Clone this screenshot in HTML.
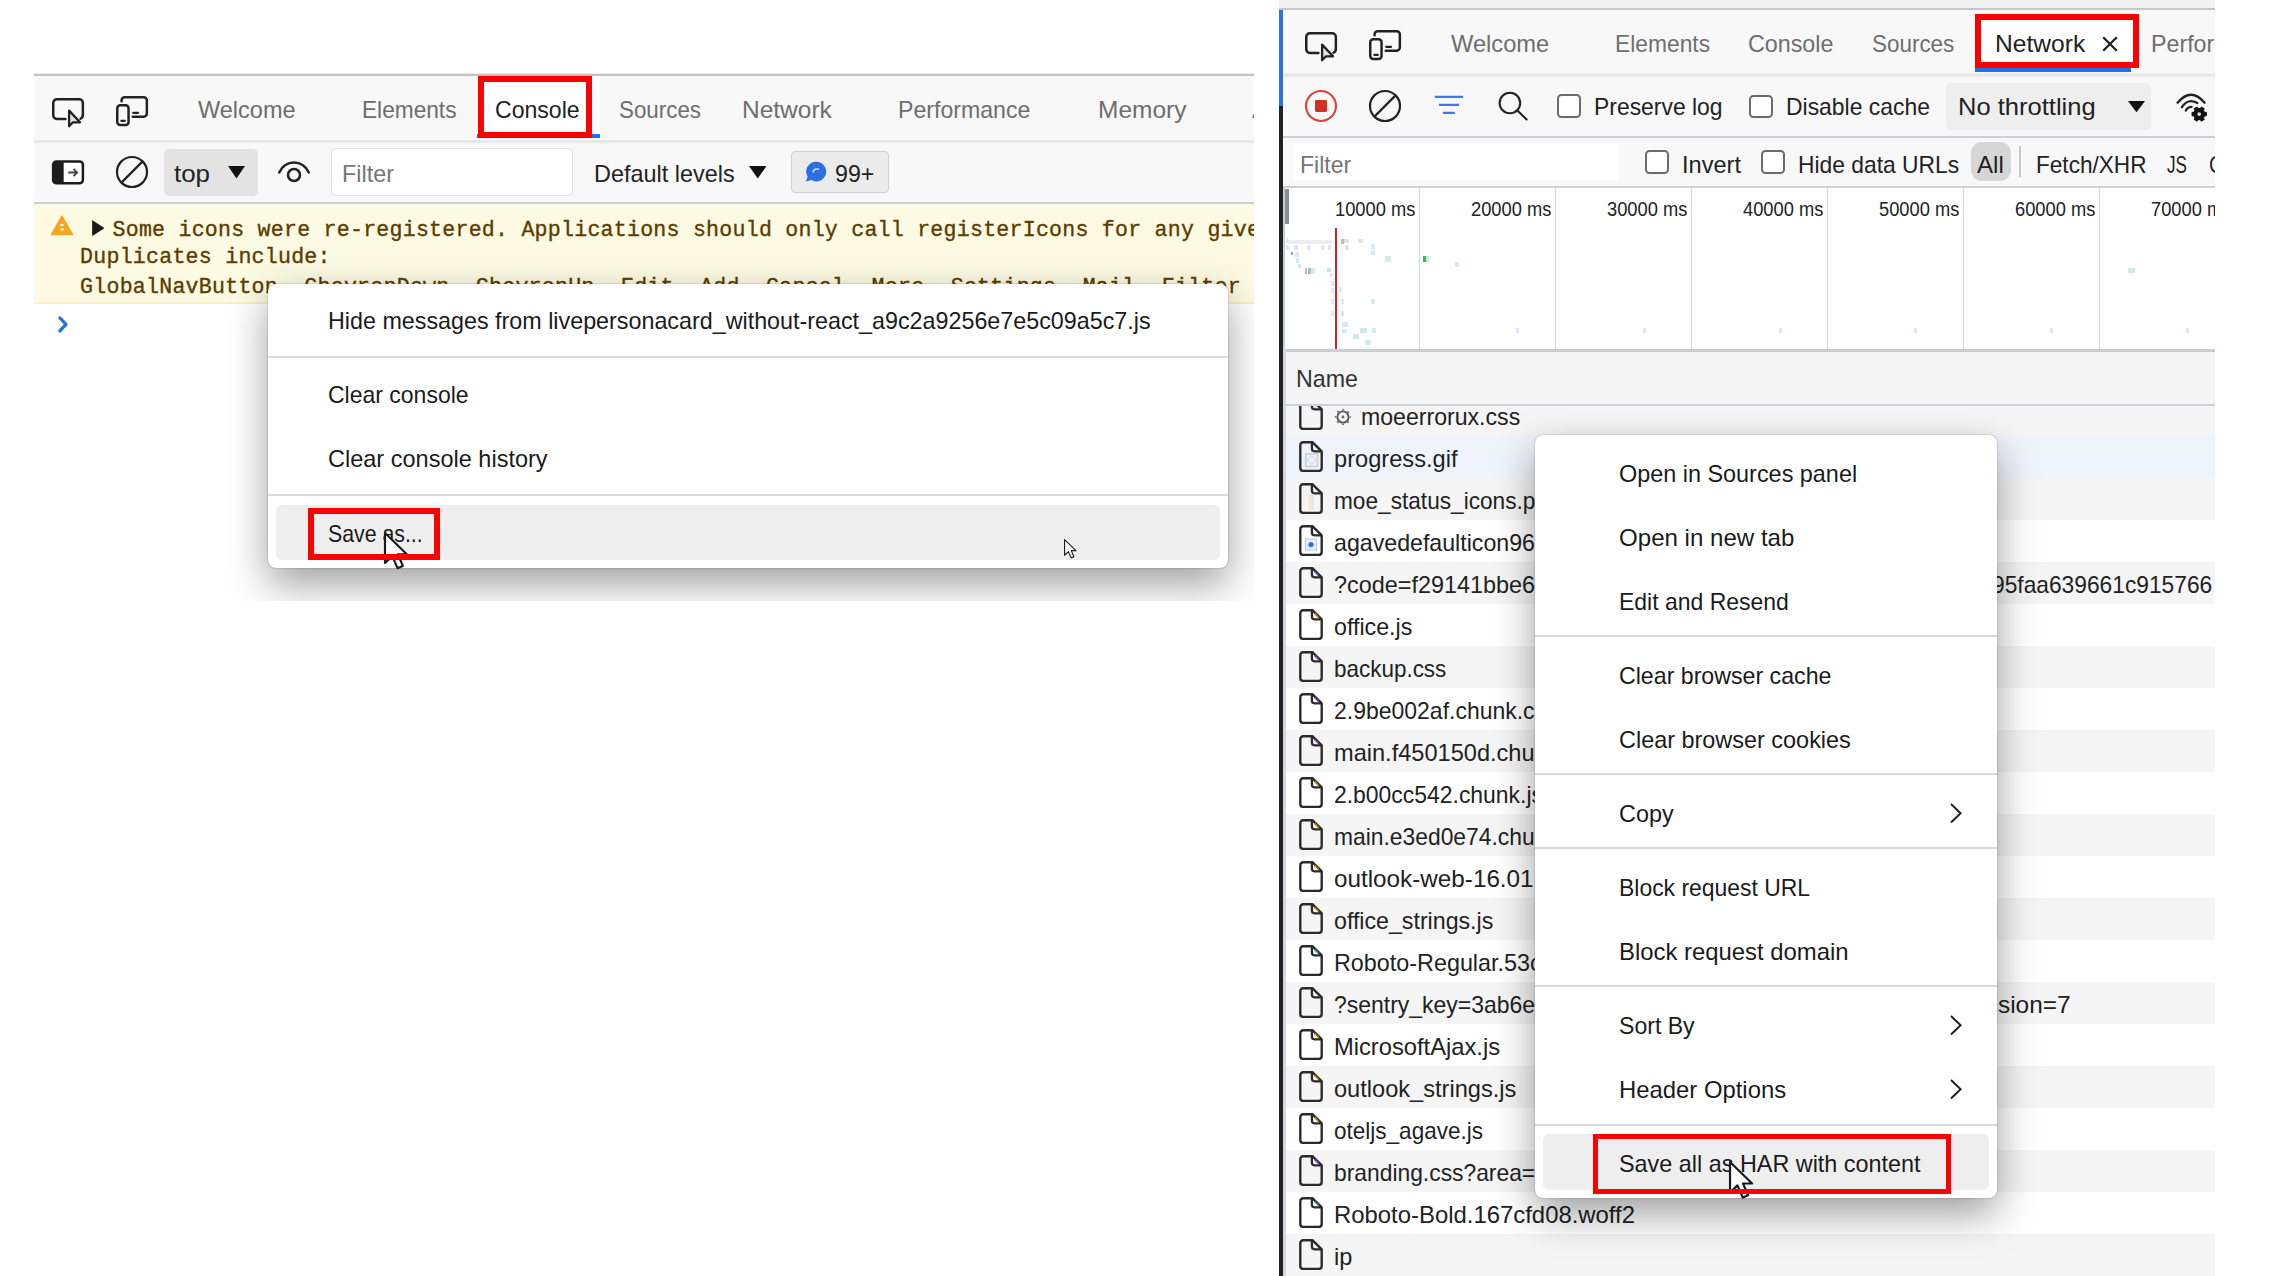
<!DOCTYPE html>
<html><head><meta charset="utf-8"><title>DevTools</title><style>
html,body{margin:0;padding:0;background:#fff}
body{width:2286px;height:1276px;position:relative;overflow:hidden;font-family:"Liberation Sans",sans-serif}
.clip{position:absolute;left:0;top:0;width:2286px;height:1276px}
.clip2{position:absolute;left:0;top:0;width:2286px;height:1276px}
.a{position:absolute;display:block}
.t{position:absolute;white-space:pre;display:block;transform-origin:0 0}
.s{font-family:"Liberation Sans",sans-serif}
.m{font-family:"Liberation Mono",monospace}
.menu{background:#fff;border-radius:8px;box-shadow:0 0 1.5px rgba(0,0,0,.42),0 16px 40px rgba(0,0,0,.385)}
</style></head><body>
<div class="clip" style="clip-path:inset(73px 1032px 675px 34px)">
<div class="a" style="left:34px;top:73px;width:1220px;height:528px;background:#fff;"></div>
<div class="a" style="left:34px;top:73px;width:1220px;height:1px;background:#ececec;"></div>
<div class="a" style="left:34px;top:74px;width:1220px;height:2px;background:#c2c2c2;"></div>
<div class="a" style="left:34px;top:76px;width:1220px;height:64px;background:#f8f8f8;"></div>
<div class="a" style="left:34px;top:140px;width:1220px;height:1px;background:#ebebeb;"></div>
<div class="a" style="left:34px;top:141px;width:1220px;height:1px;background:#e4e4e4;"></div>
<div class="a" style="left:34px;top:142px;width:1220px;height:1px;background:#ededed;"></div>
<div class="a" style="left:34px;top:143px;width:1220px;height:1px;background:#f4f4f4;"></div>
<div class="a" style="left:34px;top:144px;width:1220px;height:58px;background:#f8f8f8;"></div>
<div class="a" style="left:34px;top:202px;width:1220px;height:2px;background:#cbcfd8;"></div>
<div class="a" style="left:478px;top:76px;width:122px;height:58.5px;background:#fff;"></div>
<div class="a" style="left:476.5px;top:134px;width:123.5px;height:3.8000000000000114px;background:#1a73e8;"></div>
<div class="a" style="left:478px;top:75.6px;width:114px;height:62px;box-sizing:border-box;border:6.1px solid #ff0000"></div>
<svg class="a" style="left:50.7px;top:96.7px;" width="36" height="32" viewBox="0 0 36 32"><path d="M14.4 21.95H5.85a3.6 3.6 0 0 1-3.6-3.6V5.85a3.6 3.6 0 0 1 3.6-3.6H28.25a3.6 3.6 0 0 1 3.6 3.6V18.35a3.6 3.6 0 0 1-2.3 3.35" fill="none" stroke="#222" stroke-width="2.5" stroke-linecap="round"/><path d="M18.1 13.6V29.3L22 25.3H29z" fill="#e4e4e4" stroke="#222" stroke-width="2.3" stroke-linejoin="round"/></svg>
<svg class="a" style="left:114.9px;top:95px;" width="36" height="33" viewBox="0 0 36 33"><path d="M6.55 6.3V5.4a3.15 3.15 0 0 1 3.15-3.15H28.7a3.15 3.15 0 0 1 3.15 3.15V18.5a3.15 3.15 0 0 1-3.15 3.15H17.8" fill="none" stroke="#222" stroke-width="2.5" stroke-linecap="round"/><rect x="2.25" y="10.35" width="11.3" height="19.7" rx="3" fill="none" stroke="#222" stroke-width="2.5"/><path d="M6.4 25.8h3.4M18.2 17.8h4.8" stroke="#222" stroke-width="2.3" stroke-linecap="round"/></svg>
<span class="t s " style="left:197.7px;top:94.9px;font-size:24px;line-height:30px;color:#6e6e6e;transform:scaleX(0.9800);">Welcome</span>
<span class="t s " style="left:361.9px;top:94.9px;font-size:24px;line-height:30px;color:#6e6e6e;transform:scaleX(0.9446);">Elements</span>
<span class="t s " style="left:495.4px;top:94.9px;font-size:24px;line-height:30px;color:#222;transform:scaleX(0.9607);">Console</span>
<span class="t s " style="left:619.4px;top:94.9px;font-size:24px;line-height:30px;color:#6e6e6e;transform:scaleX(0.9313);">Sources</span>
<span class="t s " style="left:741.7px;top:94.9px;font-size:24px;line-height:30px;color:#6e6e6e;transform:scaleX(1.0202);">Network</span>
<span class="t s " style="left:898.4px;top:94.9px;font-size:24px;line-height:30px;color:#6e6e6e;transform:scaleX(0.9629);">Performance</span>
<span class="t s " style="left:1097.5px;top:94.9px;font-size:24px;line-height:30px;color:#6e6e6e;transform:scaleX(1.0199);">Memory</span>
<span class="t s " style="left:1251.5px;top:94.9px;font-size:24px;line-height:30px;color:#6e6e6e;transform:scaleX(1.0518);">Application</span>
<svg class="a" style="left:51px;top:158.6px;" width="34.6" height="27" viewBox="0 0 36 28"><rect x="2.2" y="2.6" width="31" height="22.6" rx="3.4" fill="#fff" stroke="#1c1c1c" stroke-width="2.6"/><path d="M5 2.6h8.2v22.6H5a2.8 2.8 0 0 1-2.8-2.8V5.4A2.8 2.8 0 0 1 5 2.6z" fill="#1c1c1c"/><path d="M18 14h9M23.4 10.2l3.8 3.8-3.8 3.8" fill="none" stroke="#444" stroke-width="1.9"/></svg>
<svg class="a" style="left:114px;top:154px;" width="36" height="36" viewBox="-18 -18 36 36"><circle r="15" fill="none" stroke="#222" stroke-width="2.2"/><path d="M-10.6 10.6L10.6 -10.6" stroke="#222" stroke-width="2.2"/></svg>
<div class="a" style="left:164px;top:148.5px;width:94px;height:47.0px;background:#e3e3e3;border-radius:5px;"></div>
<span class="t s " style="left:173.9px;top:158.7px;font-size:24px;line-height:30px;color:#222;transform:scaleX(1.0790);">top</span>
<svg class="a" style="left:227.5px;top:166px;" width="17.0" height="12.5" viewBox="0 0 17.0 12.5"><path d="M0 0H17.0L8.5 12.5z" fill="#111"/></svg>
<svg class="a" style="left:276px;top:158px;" width="36" height="28" viewBox="0 0 36 28"><path d="M3.2 14.5C6.5 8 11.8 4.6 18 4.6S29.5 8 32.8 14.5" fill="none" stroke="#222" stroke-width="2.5" stroke-linecap="round"/><circle cx="18" cy="17" r="6" fill="none" stroke="#222" stroke-width="2.5"/></svg>
<div class="a" style="left:331px;top:147.5px;width:242px;height:48.5px;box-sizing:border-box;border:1.5px solid #e2e2e2;border-radius:5px;background:#fff"></div>
<span class="t s " style="left:341.6px;top:158.7px;font-size:24px;line-height:30px;color:#767676;transform:scaleX(0.9750);">Filter</span>
<span class="t s " style="left:593.5px;top:158.7px;font-size:24px;line-height:30px;color:#222;transform:scaleX(0.9759);">Default levels</span>
<svg class="a" style="left:749px;top:166px;" width="17.5" height="12.5" viewBox="0 0 17.5 12.5"><path d="M0 0H17.5L8.75 12.5z" fill="#111"/></svg>
<div class="a" style="left:790.5px;top:150.5px;width:98.5px;height:42.5px;box-sizing:border-box;border:1.5px solid #cfcfcf;border-radius:4px;background:#ebebeb"></div>
<svg class="a" style="left:804px;top:160px;" width="24" height="24" viewBox="0 0 24 24"><path d="M12.4 1.8a9.8 9.8 0 1 1-4.9 18.3L2 21.6l1.6-5A9.8 9.8 0 0 1 12.4 1.8z" fill="#2b6fe3"/><path d="M9.2 12.6c0-2.2 1.6-3.6 3.8-3.6h2.2" fill="none" stroke="#cfe0ff" stroke-width="1.6"/></svg>
<span class="t s " style="left:835.0px;top:158.7px;font-size:24px;line-height:30px;color:#222;transform:scaleX(0.9678);">99+</span>
<div class="a" style="left:34px;top:204px;width:1220px;height:98px;background:#fdfae3;"></div>
<div class="a" style="left:34px;top:302px;width:1220px;height:1.5px;background:#fdf0c0;"></div>
<svg class="a" style="left:50px;top:215.4px;" width="24" height="21" viewBox="0 0 26 23"><path d="M13 1.2L24.6 21.4H1.4z" fill="#f5a623" stroke="#f5a623" stroke-width="1.6" stroke-linejoin="round"/><path d="M11.2 11h3.6M11.2 16h3.6" stroke="#fdfae3" stroke-width="2.2"/></svg>
<svg class="a" style="left:91.8px;top:219.8px;" width="12.6" height="16.2" viewBox="0 0 13 17"><path d="M0 0L13 8.5L0 17z" fill="#1a1a1a"/></svg>
<span class="t m " style="left:112.5px;top:216.5px;font-size:21.6px;line-height:27px;letter-spacing:0.233px;color:#5c3c00;-webkit-text-stroke:0.35px #5c3c00;">Some icons were re-registered. Applications should only call registerIcons for any given</span>
<span class="t m " style="left:80.1px;top:244.4px;font-size:21.6px;line-height:27px;letter-spacing:0.233px;color:#5c3c00;-webkit-text-stroke:0.35px #5c3c00;">Duplicates include:</span>
<span class="t m " style="left:80.1px;top:274.4px;font-size:21.6px;line-height:27px;letter-spacing:0.233px;color:#5c3c00;-webkit-text-stroke:0.35px #5c3c00;">GlobalNavButton, ChevronDown, ChevronUp, Edit, Add, Cancel, More, Settings, Mail, Filter</span>
<svg class="a" style="left:55px;top:312.6px;" width="16" height="22" viewBox="0 0 16 22"><path d="M4.9 4.9L11 11.4L4.9 17.9" fill="none" stroke="#2a72d6" stroke-width="3.3" stroke-linecap="round" stroke-linejoin="round"/></svg>
<div class="a menu" style="left:268px;top:284px;width:960px;height:284px"></div>
<div class="a" style="left:268px;top:356px;width:960px;height:2px;background:#d8d8d8;"></div>
<div class="a" style="left:268px;top:494px;width:960px;height:2px;background:#d8d8d8;"></div>
<div class="a" style="left:276px;top:504.5px;width:944px;height:55.5px;background:#eeeeee;border-radius:6px;"></div>
<span class="t s " style="left:328.4px;top:306.1px;font-size:24px;line-height:30px;color:#1b1b1b;transform:scaleX(0.9710);">Hide messages from livepersonacard_without-react_a9c2a9256e7e5c09a5c7.js</span>
<span class="t s " style="left:328.4px;top:380.1px;font-size:24px;line-height:30px;color:#1b1b1b;transform:scaleX(0.9581);">Clear console</span>
<span class="t s " style="left:328.4px;top:444.1px;font-size:24px;line-height:30px;color:#1b1b1b;transform:scaleX(0.9799);">Clear console history</span>
<span class="t s " style="left:328.0px;top:518.7px;font-size:24px;line-height:30px;color:#1b1b1b;transform:scaleX(0.8873);">Save as...</span>
<svg class="a" style="left:382.22px;top:530.22px;" width="28.199999999999996" height="42.3" viewBox="-1 -1 15 22.5"><path d="M0.6 0.6V16.6L4.5 12.9L7.3 19.3L10.1 18.1L7.4 11.9H12.2z" fill="#fff" stroke="#1a1a24" stroke-width="1.15" stroke-linejoin="round"/></svg>
<div class="a" style="left:308px;top:508px;width:132px;height:52px;box-sizing:border-box;border:6px solid #ff0000"></div>
<svg class="a" style="left:1063.12px;top:537.8199999999999px;" width="14.7" height="22.05" viewBox="-1 -1 15 22.5"><path d="M0.6 0.6V16.6L4.5 12.9L7.3 19.3L10.1 18.1L7.4 11.9H12.2z" fill="#fff" stroke="#1a1a24" stroke-width="1.15" stroke-linejoin="round"/></svg>
</div>
<div class="clip" style="clip-path:inset(0px 71px 0px 1279px)">
<div class="a" style="left:1279px;top:0px;width:936px;height:1276px;background:#fff;"></div>
<div class="a" style="left:1279px;top:0px;width:936px;height:8px;background:#f1f1f1;"></div>
<div class="a" style="left:1279px;top:8px;width:936px;height:2px;background:#c6c6c6;"></div>
<div class="a" style="left:1279px;top:10px;width:936px;height:63px;background:#f8f8f8;"></div>
<div class="a" style="left:1279px;top:73px;width:936px;height:1px;background:#efefef;"></div>
<div class="a" style="left:1279px;top:74px;width:936px;height:2px;background:#e5e5e5;"></div>
<div class="a" style="left:1279px;top:76px;width:936px;height:1px;background:#eeeeee;"></div>
<div class="a" style="left:1279px;top:77px;width:936px;height:1px;background:#f4f4f4;"></div>
<div class="a" style="left:1279px;top:78px;width:936px;height:57.5px;background:#f8f8f8;"></div>
<div class="a" style="left:1279px;top:135.5px;width:936px;height:2.5px;background:#cdd0d6;"></div>
<div class="a" style="left:1279px;top:138px;width:936px;height:48px;background:#f8f8f8;"></div>
<div class="a" style="left:1279px;top:185.6px;width:936px;height:2.200000000000017px;background:#cdd0d6;"></div>
<div class="a" style="left:1975px;top:67px;width:155.80000000000018px;height:5.099999999999994px;background:#1a73e8;"></div>
<div class="a" style="left:1975px;top:14px;width:164px;height:54px;box-sizing:border-box;border:6px solid #ff0000;background:#fff"></div>
<svg class="a" style="left:1303.8px;top:30.8px;" width="36" height="32" viewBox="0 0 36 32"><path d="M14.4 21.95H5.85a3.6 3.6 0 0 1-3.6-3.6V5.85a3.6 3.6 0 0 1 3.6-3.6H28.25a3.6 3.6 0 0 1 3.6 3.6V18.35a3.6 3.6 0 0 1-2.3 3.35" fill="none" stroke="#222" stroke-width="2.5" stroke-linecap="round"/><path d="M18.1 13.6V29.3L22 25.3H29z" fill="#e4e4e4" stroke="#222" stroke-width="2.3" stroke-linejoin="round"/></svg>
<svg class="a" style="left:1367.8px;top:28.8px;" width="36" height="33" viewBox="0 0 36 33"><path d="M6.55 6.3V5.4a3.15 3.15 0 0 1 3.15-3.15H28.7a3.15 3.15 0 0 1 3.15 3.15V18.5a3.15 3.15 0 0 1-3.15 3.15H17.8" fill="none" stroke="#222" stroke-width="2.5" stroke-linecap="round"/><rect x="2.25" y="10.35" width="11.3" height="19.7" rx="3" fill="none" stroke="#222" stroke-width="2.5"/><path d="M6.4 25.8h3.4M18.2 17.8h4.8" stroke="#222" stroke-width="2.3" stroke-linecap="round"/></svg>
<span class="t s " style="left:1450.5px;top:28.7px;font-size:24px;line-height:30px;color:#6e6e6e;transform:scaleX(0.9861);">Welcome</span>
<span class="t s " style="left:1614.5px;top:28.7px;font-size:24px;line-height:30px;color:#6e6e6e;transform:scaleX(0.9506);">Elements</span>
<span class="t s " style="left:1747.9px;top:28.7px;font-size:24px;line-height:30px;color:#6e6e6e;transform:scaleX(0.9698);">Console</span>
<span class="t s " style="left:1872.4px;top:28.7px;font-size:24px;line-height:30px;color:#6e6e6e;transform:scaleX(0.9347);">Sources</span>
<span class="t s " style="left:1994.6px;top:28.7px;font-size:24px;line-height:30px;color:#222;transform:scaleX(1.0247);">Network</span>
<svg class="a" style="left:2101px;top:35px;" width="18" height="18" viewBox="0 0 18 18"><path d="M2.2 2.2L15.8 15.8M15.8 2.2L2.2 15.8" stroke="#222" stroke-width="2.3"/></svg>
<span class="t s " style="left:2150.6px;top:28.7px;font-size:24px;line-height:30px;color:#6e6e6e;transform:scaleX(0.9673);">Performance</span>
<svg class="a" style="left:1303px;top:88px;" width="36" height="36" viewBox="-18 -18 36 36"><circle r="15" fill="none" stroke="#dc4238" stroke-width="2.1"/><rect x="-6" y="-6" width="12" height="12" rx="1.4" fill="#d32f25"/></svg>
<svg class="a" style="left:1367.2px;top:88px;" width="36" height="36" viewBox="-18 -18 36 36"><circle r="15" fill="none" stroke="#222" stroke-width="2.2"/><path d="M-10.6 10.6L10.6 -10.6" stroke="#222" stroke-width="2.2"/></svg>
<svg class="a" style="left:1434px;top:94px;" width="32" height="24" viewBox="0 0 32 24"><path d="M0.9 2.95H29.1M5 10.9H25M8.9 18.8H20.9" stroke="#3b7be9" stroke-width="2.3"/></svg>
<svg class="a" style="left:1496px;top:90px;" width="34" height="34" viewBox="0 0 34 34"><circle cx="13.9" cy="13" r="10.3" fill="none" stroke="#222" stroke-width="2.1"/><path d="M21.4 20.6L30.6 29.6" stroke="#222" stroke-width="2.1" stroke-linecap="round"/></svg>
<div class="a" style="left:1557.3px;top:94.2px;width:23.5px;height:23.5px;box-sizing:border-box;border:2px solid #6b6b6b;border-radius:4.5px;background:#fff"></div>
<span class="t s " style="left:1593.9px;top:92.3px;font-size:24px;line-height:30px;color:#222;transform:scaleX(0.9545);">Preserve log</span>
<div class="a" style="left:1749px;top:94.5px;width:23.5px;height:23.5px;box-sizing:border-box;border:2px solid #6b6b6b;border-radius:4.5px;background:#fff"></div>
<span class="t s " style="left:1785.8px;top:92.3px;font-size:24px;line-height:30px;color:#222;transform:scaleX(0.9545);">Disable cache</span>
<div class="a" style="left:1945.5px;top:82.5px;width:205.5px;height:47.0px;background:#eeeeee;border-radius:5px;"></div>
<span class="t s " style="left:1958.3px;top:92.3px;font-size:24px;line-height:30px;color:#222;transform:scaleX(1.0641);">No throttling</span>
<svg class="a" style="left:2128px;top:100.5px;" width="17" height="11.299999999999997" viewBox="0 0 17 11.299999999999997"><path d="M0 0H17L8.5 11.299999999999997z" fill="#111"/></svg>
<svg class="a" style="left:2170px;top:86px;" width="44" height="40" viewBox="2170 86 44 40"><path d="M2177.6 102.7Q2191 86.8 2204.6 102.7" fill="none" stroke="#222" stroke-width="2.3" stroke-linecap="round"/><path d="M2181.9 107.2Q2188 97.8 2197.4 103" fill="none" stroke="#222" stroke-width="2.3" stroke-linecap="round"/><path d="M2185.8 110.6Q2187.6 106.9 2191.6 106.8" fill="none" stroke="#222" stroke-width="2.3" stroke-linecap="round"/><path d="M2206.39 112.34L2206.39 115.86L2204.63 115.83L2203.41 117.94L2204.32 119.45L2201.27 121.20L2200.42 119.67L2197.98 119.67L2197.13 121.20L2194.08 119.45L2194.99 117.94L2193.77 115.83L2192.01 115.86L2192.01 112.34L2193.77 112.37L2194.99 110.26L2194.08 108.75L2197.13 107.00L2197.98 108.53L2200.42 108.53L2201.27 107.00L2204.32 108.75L2203.41 110.26L2204.63 112.37z" fill="#111" stroke="#111" stroke-width="1" stroke-linejoin="round"/><circle cx="2199.2" cy="114.1" r="1.9" fill="#d8d8d8"/></svg>
<div class="a" style="left:1292.5px;top:144px;width:326.5px;height:35.69999999999999px;background:#fff;"></div>
<span class="t s " style="left:1300.2px;top:149.9px;font-size:24px;line-height:30px;color:#767676;transform:scaleX(0.9619);">Filter</span>
<div class="a" style="left:1645.3px;top:150.3px;width:23.5px;height:23.5px;box-sizing:border-box;border:2px solid #6b6b6b;border-radius:4.5px;background:#fff"></div>
<span class="t s " style="left:1682.0px;top:149.9px;font-size:24px;line-height:30px;color:#222;transform:scaleX(0.9829);">Invert</span>
<div class="a" style="left:1761.4px;top:150.3px;width:23.5px;height:23.5px;box-sizing:border-box;border:2px solid #6b6b6b;border-radius:4.5px;background:#fff"></div>
<span class="t s " style="left:1798.1px;top:149.9px;font-size:24px;line-height:30px;color:#222;transform:scaleX(0.9509);">Hide data URLs</span>
<div class="a" style="left:1971px;top:142.2px;width:39.59999999999991px;height:39.0px;background:#d6d6d6;border-radius:11px;"></div>
<span class="t s " style="left:1977.0px;top:149.9px;font-size:24px;line-height:30px;color:#222;transform:scaleX(1.0047);">All</span>
<div class="a" style="left:2019px;top:146px;width:1.5px;height:31px;background:#c9c9c9;"></div>
<span class="t s " style="left:2035.7px;top:149.9px;font-size:24px;line-height:30px;color:#222;transform:scaleX(0.9415);">Fetch/XHR</span>
<span class="t s " style="left:2166.9px;top:149.9px;font-size:24px;line-height:30px;color:#222;transform:scaleX(0.7105);">JS</span>
<span class="t s " style="left:2208.6px;top:149.9px;font-size:24px;line-height:30px;color:#222;transform:scaleX(0.8389);">CSS</span>
<div class="a" style="left:1279px;top:187.8px;width:936px;height:160.7px;background:#fff;"></div>
<div class="a" style="left:1419px;top:188px;width:1px;height:160.5px;background:#d6d7da;"></div>
<div class="a" style="left:1555px;top:188px;width:1px;height:160.5px;background:#d6d7da;"></div>
<div class="a" style="left:1691px;top:188px;width:1px;height:160.5px;background:#d6d7da;"></div>
<div class="a" style="left:1827px;top:188px;width:1px;height:160.5px;background:#d6d7da;"></div>
<div class="a" style="left:1963px;top:188px;width:1px;height:160.5px;background:#d6d7da;"></div>
<div class="a" style="left:2099px;top:188px;width:1px;height:160.5px;background:#d6d7da;"></div>
<span class="t s " style="left:1334.8px;top:196.9px;font-size:20px;line-height:25px;color:#222;transform:scaleX(0.9154);">10000 ms</span>
<span class="t s " style="left:1470.8px;top:196.9px;font-size:20px;line-height:25px;color:#222;transform:scaleX(0.9154);">20000 ms</span>
<span class="t s " style="left:1606.8px;top:196.9px;font-size:20px;line-height:25px;color:#222;transform:scaleX(0.9154);">30000 ms</span>
<span class="t s " style="left:1742.8px;top:196.9px;font-size:20px;line-height:25px;color:#222;transform:scaleX(0.9154);">40000 ms</span>
<span class="t s " style="left:1878.8px;top:196.9px;font-size:20px;line-height:25px;color:#222;transform:scaleX(0.9154);">50000 ms</span>
<span class="t s " style="left:2014.8px;top:196.9px;font-size:20px;line-height:25px;color:#222;transform:scaleX(0.9154);">60000 ms</span>
<span class="t s " style="left:2150.8px;top:196.9px;font-size:20px;line-height:25px;color:#222;transform:scaleX(0.9154);">70000 ms</span>
<div class="a" style="left:1285.2px;top:188.5px;width:3.7000000000000455px;height:35.0px;background:#8e8e8e;"></div>
<div class="a" style="left:1334.8px;top:228px;width:1.7999999999999545px;height:120.5px;background:#d32222;"></div>
<div class="a" style="left:1286px;top:238px;width:2px;height:5px;background:#dfe7f7;"></div>
<div class="a" style="left:1288px;top:240px;width:44px;height:4px;background:#eeeeee;"></div>
<div class="a" style="left:1341px;top:239px;width:3px;height:5px;background:#bdbdbd;"></div>
<div class="a" style="left:1344px;top:239px;width:5px;height:4px;background:#e2e2e2;"></div>
<div class="a" style="left:1358px;top:239px;width:5px;height:4px;background:#e6e6e6;"></div>
<div class="a" style="left:1286px;top:245px;width:3px;height:5px;background:#d7e9f7;"></div>
<div class="a" style="left:1294px;top:245px;width:4px;height:5px;background:#d7e9f7;"></div>
<div class="a" style="left:1307px;top:245px;width:3px;height:5px;background:#d7e9f7;"></div>
<div class="a" style="left:1321px;top:245px;width:3px;height:5px;background:#d7e9f7;"></div>
<div class="a" style="left:1328px;top:245px;width:3px;height:5px;background:#d7e9f7;"></div>
<div class="a" style="left:1345px;top:245px;width:4px;height:5px;background:#d7e9f7;"></div>
<div class="a" style="left:1371px;top:244px;width:4px;height:5px;background:#d7e9f7;"></div>
<div class="a" style="left:1371px;top:250px;width:4px;height:5px;background:#d7e9f7;"></div>
<div class="a" style="left:1291px;top:252px;width:2px;height:3px;background:#9e9e9e;"></div>
<div class="a" style="left:1295px;top:252px;width:4px;height:5px;background:#d7e9f7;"></div>
<div class="a" style="left:1296px;top:258px;width:3px;height:5px;background:#d7e9f7;"></div>
<div class="a" style="left:1298px;top:264px;width:3px;height:4px;background:#d7e9f7;"></div>
<div class="a" style="left:1305px;top:268px;width:2px;height:6px;background:#d9a6e0;"></div>
<div class="a" style="left:1308px;top:268px;width:3px;height:6px;background:#8fd19e;"></div>
<div class="a" style="left:1311px;top:268px;width:4px;height:6px;background:#d7eef0;"></div>
<div class="a" style="left:1327px;top:268px;width:4px;height:4px;background:#c4ead8;"></div>
<div class="a" style="left:1330px;top:273px;width:3px;height:4px;background:#d7e9f7;"></div>
<div class="a" style="left:1385px;top:256px;width:6px;height:6px;background:#d2efe2;"></div>
<div class="a" style="left:1423px;top:256px;width:3px;height:6px;background:#3fb55d;"></div>
<div class="a" style="left:1426px;top:256px;width:3px;height:6px;background:#c9ecd6;"></div>
<div class="a" style="left:1455px;top:262px;width:4px;height:5px;background:#d7e9f7;"></div>
<div class="a" style="left:1331px;top:281px;width:3px;height:5px;background:#d7e9f7;"></div>
<div class="a" style="left:1331px;top:288px;width:3px;height:5px;background:#d7e9f7;"></div>
<div class="a" style="left:1339px;top:287px;width:3px;height:5px;background:#d7e9f7;"></div>
<div class="a" style="left:1331px;top:299px;width:3px;height:5px;background:#d7e9f7;"></div>
<div class="a" style="left:1341px;top:299px;width:3px;height:5px;background:#d7e9f7;"></div>
<div class="a" style="left:1371px;top:299px;width:4px;height:5px;background:#d7e9f7;"></div>
<div class="a" style="left:1331px;top:311px;width:3px;height:5px;background:#d7e9f7;"></div>
<div class="a" style="left:1341px;top:311px;width:3px;height:5px;background:#d7e9f7;"></div>
<div class="a" style="left:1342px;top:322px;width:6px;height:5px;background:#d7e9f7;"></div>
<div class="a" style="left:1342px;top:329px;width:5px;height:4px;background:#d7e9f7;"></div>
<div class="a" style="left:1360px;top:328px;width:7px;height:5px;background:#cfe8ea;"></div>
<div class="a" style="left:1372px;top:328px;width:4px;height:5px;background:#d7e9f7;"></div>
<div class="a" style="left:1353px;top:334px;width:6px;height:5px;background:#cfe8ea;"></div>
<div class="a" style="left:1365px;top:340px;width:6px;height:5px;background:#d7e9f7;"></div>
<div class="a" style="left:1516px;top:328px;width:3px;height:5px;background:#d7e9f7;"></div>
<div class="a" style="left:1643px;top:328px;width:3px;height:5px;background:#d7e9f7;"></div>
<div class="a" style="left:1779px;top:328px;width:3px;height:5px;background:#d7e9f7;"></div>
<div class="a" style="left:1914px;top:328px;width:3px;height:5px;background:#d7e9f7;"></div>
<div class="a" style="left:2050px;top:328px;width:3px;height:5px;background:#d7e9f7;"></div>
<div class="a" style="left:2186px;top:328px;width:3px;height:5px;background:#d7e9f7;"></div>
<div class="a" style="left:2128px;top:268px;width:7px;height:5px;background:#cfe8f0;"></div>
<div class="a" style="left:1279px;top:348.5px;width:936px;height:3.0px;background:#c9ccd3;"></div>
<div class="a" style="left:1279px;top:351.5px;width:936px;height:52.0px;background:#f5f5f5;"></div>
<span class="t s " style="left:1296.4px;top:364.3px;font-size:24px;line-height:30px;color:#333;transform:scaleX(0.9669);">Name</span>
<div class="a" style="left:1279px;top:403.5px;width:936px;height:2.5px;background:#cdd0d6;"></div>
<div class="clip2" style="clip-path:inset(406px 71px 0px 1279px)">
<div class="a" style="left:1283.5px;top:394.3px;width:931.5px;height:42.0px;background:#f5f5f5;"></div>
<svg class="a" style="left:1298.8px;top:398.5px;" width="24" height="31" viewBox="0 0 24 31"><path d="M4.2 1.3H13.6L22.7 10.4V27a2.9 2.9 0 0 1-2.9 2.9H4.2a2.9 2.9 0 0 1-2.9-2.9V4.2a2.9 2.9 0 0 1 2.9-2.9z" fill="none" stroke="#2b2b2b" stroke-width="2.4" stroke-linejoin="round"/><path d="M12.9 1.4V7.6a2.7 2.7 0 0 0 2.7 2.7H22.6" fill="none" stroke="#2b2b2b" stroke-width="2.3"/></svg>
<svg class="a" style="left:1333.4px;top:407.2px;" width="20" height="20" viewBox="-10 -10 20 20"><circle r="5.6" fill="none" stroke="#5a5a5a" stroke-width="1.9"/><circle r="7.3" fill="none" stroke="#777" stroke-width="1.7" stroke-dasharray="2 3.733" stroke-dashoffset="1"/><circle r="1.4" fill="#666"/></svg>
<span class="t s " style="left:1360.6px;top:401.7px;font-size:24px;line-height:30px;color:#222;transform:scaleX(0.9626);">moeerrorux.css</span>
<div class="a" style="left:1283.5px;top:436.3px;width:931.5px;height:42.0px;background:#eff3fb;"></div>
<svg class="a" style="left:1298.8px;top:440.5px;" width="24" height="31" viewBox="0 0 24 31"><path d="M4.2 1.3H13.6L22.7 10.4V27a2.9 2.9 0 0 1-2.9 2.9H4.2a2.9 2.9 0 0 1-2.9-2.9V4.2a2.9 2.9 0 0 1 2.9-2.9z" fill="none" stroke="#2b2b2b" stroke-width="2.4" stroke-linejoin="round"/><path d="M12.9 1.4V7.6a2.7 2.7 0 0 0 2.7 2.7H22.6" fill="none" stroke="#2b2b2b" stroke-width="2.3"/><rect x="6.8" y="12.8" width="11.6" height="12.4" fill="#f3f7fd" stroke="#d2d2d2" stroke-width="1.9"/><path d="M8.4 19l4.2-4.2 4.2 4.2-4.2 4.2z" fill="none" stroke="#cfe0f5" stroke-width="1.5"/></svg>
<span class="t s " style="left:1334.0px;top:443.7px;font-size:24px;line-height:30px;color:#222;transform:scaleX(0.9849);">progress.gif</span>
<div class="a" style="left:1283.5px;top:478.3px;width:931.5px;height:41.99999999999994px;background:#f5f5f5;"></div>
<svg class="a" style="left:1298.8px;top:482.5px;" width="24" height="31" viewBox="0 0 24 31"><path d="M4.2 1.3H13.6L22.7 10.4V27a2.9 2.9 0 0 1-2.9 2.9H4.2a2.9 2.9 0 0 1-2.9-2.9V4.2a2.9 2.9 0 0 1 2.9-2.9z" fill="none" stroke="#2b2b2b" stroke-width="2.4" stroke-linejoin="round"/><path d="M12.9 1.4V7.6a2.7 2.7 0 0 0 2.7 2.7H22.6" fill="none" stroke="#2b2b2b" stroke-width="2.3"/><rect x="9.6" y="11" width="3.2" height="16" fill="#f2e8c9"/><rect x="12.8" y="11" width="2" height="16" fill="#e4e6ea"/></svg>
<span class="t s " style="left:1334.0px;top:485.7px;font-size:24px;line-height:30px;color:#222;transform:scaleX(0.9435);max-width:640px;overflow:hidden;">moe_status_icons.png</span>
<div class="a" style="left:1283.5px;top:520.3px;width:931.5px;height:42.0px;background:#fff;"></div>
<svg class="a" style="left:1298.8px;top:524.5px;" width="24" height="31" viewBox="0 0 24 31"><path d="M4.2 1.3H13.6L22.7 10.4V27a2.9 2.9 0 0 1-2.9 2.9H4.2a2.9 2.9 0 0 1-2.9-2.9V4.2a2.9 2.9 0 0 1 2.9-2.9z" fill="none" stroke="#2b2b2b" stroke-width="2.4" stroke-linejoin="round"/><path d="M12.9 1.4V7.6a2.7 2.7 0 0 0 2.7 2.7H22.6" fill="none" stroke="#2b2b2b" stroke-width="2.3"/><rect x="6.4" y="14" width="11.2" height="11" fill="#e6eefb" stroke="#b8c9e6" stroke-width="1"/><circle cx="12" cy="19.6" r="2.6" fill="#2f6fe0"/></svg>
<span class="t s " style="left:1334.0px;top:527.7px;font-size:24px;line-height:30px;color:#222;transform:scaleX(0.9655);max-width:640px;overflow:hidden;">agavedefaulticon96.png</span>
<div class="a" style="left:1283.5px;top:562.3px;width:931.5px;height:42.0px;background:#f5f5f5;"></div>
<svg class="a" style="left:1298.8px;top:566.5px;" width="24" height="31" viewBox="0 0 24 31"><path d="M4.2 1.3H13.6L22.7 10.4V27a2.9 2.9 0 0 1-2.9 2.9H4.2a2.9 2.9 0 0 1-2.9-2.9V4.2a2.9 2.9 0 0 1 2.9-2.9z" fill="none" stroke="#2b2b2b" stroke-width="2.4" stroke-linejoin="round"/><path d="M12.9 1.4V7.6a2.7 2.7 0 0 0 2.7 2.7H22.6" fill="none" stroke="#2b2b2b" stroke-width="2.3"/><path d="M15.6 4.4L19.8 8.6" fill="none" stroke="#2d55b8" stroke-width="1.5"/></svg>
<span class="t s " style="left:1334.0px;top:569.7px;font-size:24px;line-height:30px;color:#222;transform:scaleX(0.9747);max-width:640px;overflow:hidden;">?code=f29141bbe6c24ea8a1a8b9a1e2d0c3f4&amp;hash=a1c4e87d0b395faa639661c915766f</span>
<div class="a" style="left:1283.5px;top:604.3px;width:931.5px;height:42.0px;background:#fff;"></div>
<svg class="a" style="left:1298.8px;top:608.5px;" width="24" height="31" viewBox="0 0 24 31"><path d="M4.2 1.3H13.6L22.7 10.4V27a2.9 2.9 0 0 1-2.9 2.9H4.2a2.9 2.9 0 0 1-2.9-2.9V4.2a2.9 2.9 0 0 1 2.9-2.9z" fill="none" stroke="#2b2b2b" stroke-width="2.4" stroke-linejoin="round"/><path d="M12.9 1.4V7.6a2.7 2.7 0 0 0 2.7 2.7H22.6" fill="none" stroke="#2b2b2b" stroke-width="2.3"/><path d="M15.6 4.4L19.8 8.6" fill="none" stroke="#b98316" stroke-width="1.5"/></svg>
<span class="t s " style="left:1334.0px;top:611.7px;font-size:24px;line-height:30px;color:#222;transform:scaleX(0.9675);">office.js</span>
<div class="a" style="left:1283.5px;top:646.3px;width:931.5px;height:42.0px;background:#f5f5f5;"></div>
<svg class="a" style="left:1298.8px;top:650.5px;" width="24" height="31" viewBox="0 0 24 31"><path d="M4.2 1.3H13.6L22.7 10.4V27a2.9 2.9 0 0 1-2.9 2.9H4.2a2.9 2.9 0 0 1-2.9-2.9V4.2a2.9 2.9 0 0 1 2.9-2.9z" fill="none" stroke="#2b2b2b" stroke-width="2.4" stroke-linejoin="round"/><path d="M12.9 1.4V7.6a2.7 2.7 0 0 0 2.7 2.7H22.6" fill="none" stroke="#2b2b2b" stroke-width="2.3"/><path d="M15.6 4.4L19.8 8.6" fill="none" stroke="#7a3eb5" stroke-width="1.5"/></svg>
<span class="t s " style="left:1334.0px;top:653.7px;font-size:24px;line-height:30px;color:#222;transform:scaleX(0.9354);">backup.css</span>
<div class="a" style="left:1283.5px;top:688.3px;width:931.5px;height:42.0px;background:#fff;"></div>
<svg class="a" style="left:1298.8px;top:692.5px;" width="24" height="31" viewBox="0 0 24 31"><path d="M4.2 1.3H13.6L22.7 10.4V27a2.9 2.9 0 0 1-2.9 2.9H4.2a2.9 2.9 0 0 1-2.9-2.9V4.2a2.9 2.9 0 0 1 2.9-2.9z" fill="none" stroke="#2b2b2b" stroke-width="2.4" stroke-linejoin="round"/><path d="M12.9 1.4V7.6a2.7 2.7 0 0 0 2.7 2.7H22.6" fill="none" stroke="#2b2b2b" stroke-width="2.3"/><path d="M15.6 4.4L19.8 8.6" fill="none" stroke="#7a3eb5" stroke-width="1.5"/></svg>
<span class="t s " style="left:1334.0px;top:695.7px;font-size:24px;line-height:30px;color:#222;transform:scaleX(0.9575);max-width:640px;overflow:hidden;">2.9be002af.chunk.css</span>
<div class="a" style="left:1283.5px;top:730.3px;width:931.5px;height:42.0px;background:#f5f5f5;"></div>
<svg class="a" style="left:1298.8px;top:734.5px;" width="24" height="31" viewBox="0 0 24 31"><path d="M4.2 1.3H13.6L22.7 10.4V27a2.9 2.9 0 0 1-2.9 2.9H4.2a2.9 2.9 0 0 1-2.9-2.9V4.2a2.9 2.9 0 0 1 2.9-2.9z" fill="none" stroke="#2b2b2b" stroke-width="2.4" stroke-linejoin="round"/><path d="M12.9 1.4V7.6a2.7 2.7 0 0 0 2.7 2.7H22.6" fill="none" stroke="#2b2b2b" stroke-width="2.3"/><path d="M15.6 4.4L19.8 8.6" fill="none" stroke="#7a3eb5" stroke-width="1.5"/></svg>
<span class="t s " style="left:1334.0px;top:737.7px;font-size:24px;line-height:30px;color:#222;transform:scaleX(0.9826);max-width:640px;overflow:hidden;">main.f450150d.chunk.css</span>
<div class="a" style="left:1283.5px;top:772.3px;width:931.5px;height:42.0px;background:#fff;"></div>
<svg class="a" style="left:1298.8px;top:776.5px;" width="24" height="31" viewBox="0 0 24 31"><path d="M4.2 1.3H13.6L22.7 10.4V27a2.9 2.9 0 0 1-2.9 2.9H4.2a2.9 2.9 0 0 1-2.9-2.9V4.2a2.9 2.9 0 0 1 2.9-2.9z" fill="none" stroke="#2b2b2b" stroke-width="2.4" stroke-linejoin="round"/><path d="M12.9 1.4V7.6a2.7 2.7 0 0 0 2.7 2.7H22.6" fill="none" stroke="#2b2b2b" stroke-width="2.3"/><path d="M15.6 4.4L19.8 8.6" fill="none" stroke="#b98316" stroke-width="1.5"/></svg>
<span class="t s " style="left:1334.0px;top:779.7px;font-size:24px;line-height:30px;color:#222;transform:scaleX(0.9550);max-width:640px;overflow:hidden;">2.b00cc542.chunk.js</span>
<div class="a" style="left:1283.5px;top:814.3px;width:931.5px;height:42.0px;background:#f5f5f5;"></div>
<svg class="a" style="left:1298.8px;top:818.5px;" width="24" height="31" viewBox="0 0 24 31"><path d="M4.2 1.3H13.6L22.7 10.4V27a2.9 2.9 0 0 1-2.9 2.9H4.2a2.9 2.9 0 0 1-2.9-2.9V4.2a2.9 2.9 0 0 1 2.9-2.9z" fill="none" stroke="#2b2b2b" stroke-width="2.4" stroke-linejoin="round"/><path d="M12.9 1.4V7.6a2.7 2.7 0 0 0 2.7 2.7H22.6" fill="none" stroke="#2b2b2b" stroke-width="2.3"/><path d="M15.6 4.4L19.8 8.6" fill="none" stroke="#b98316" stroke-width="1.5"/></svg>
<span class="t s " style="left:1334.0px;top:821.7px;font-size:24px;line-height:30px;color:#222;transform:scaleX(0.9514);max-width:640px;overflow:hidden;">main.e3ed0e74.chunk.js</span>
<div class="a" style="left:1283.5px;top:856.3px;width:931.5px;height:42.0px;background:#fff;"></div>
<svg class="a" style="left:1298.8px;top:860.5px;" width="24" height="31" viewBox="0 0 24 31"><path d="M4.2 1.3H13.6L22.7 10.4V27a2.9 2.9 0 0 1-2.9 2.9H4.2a2.9 2.9 0 0 1-2.9-2.9V4.2a2.9 2.9 0 0 1 2.9-2.9z" fill="none" stroke="#2b2b2b" stroke-width="2.4" stroke-linejoin="round"/><path d="M12.9 1.4V7.6a2.7 2.7 0 0 0 2.7 2.7H22.6" fill="none" stroke="#2b2b2b" stroke-width="2.3"/><path d="M15.6 4.4L19.8 8.6" fill="none" stroke="#b98316" stroke-width="1.5"/></svg>
<span class="t s " style="left:1334.0px;top:863.7px;font-size:24px;line-height:30px;color:#222;transform:scaleX(1.0108);max-width:640px;overflow:hidden;">outlook-web-16.01.js</span>
<div class="a" style="left:1283.5px;top:898.3px;width:931.5px;height:42.0px;background:#f5f5f5;"></div>
<svg class="a" style="left:1298.8px;top:902.5px;" width="24" height="31" viewBox="0 0 24 31"><path d="M4.2 1.3H13.6L22.7 10.4V27a2.9 2.9 0 0 1-2.9 2.9H4.2a2.9 2.9 0 0 1-2.9-2.9V4.2a2.9 2.9 0 0 1 2.9-2.9z" fill="none" stroke="#2b2b2b" stroke-width="2.4" stroke-linejoin="round"/><path d="M12.9 1.4V7.6a2.7 2.7 0 0 0 2.7 2.7H22.6" fill="none" stroke="#2b2b2b" stroke-width="2.3"/><path d="M15.6 4.4L19.8 8.6" fill="none" stroke="#b98316" stroke-width="1.5"/></svg>
<span class="t s " style="left:1334.0px;top:905.7px;font-size:24px;line-height:30px;color:#222;transform:scaleX(0.9656);">office_strings.js</span>
<div class="a" style="left:1283.5px;top:940.3px;width:931.5px;height:42.0px;background:#fff;"></div>
<svg class="a" style="left:1298.8px;top:944.5px;" width="24" height="31" viewBox="0 0 24 31"><path d="M4.2 1.3H13.6L22.7 10.4V27a2.9 2.9 0 0 1-2.9 2.9H4.2a2.9 2.9 0 0 1-2.9-2.9V4.2a2.9 2.9 0 0 1 2.9-2.9z" fill="none" stroke="#2b2b2b" stroke-width="2.4" stroke-linejoin="round"/><path d="M12.9 1.4V7.6a2.7 2.7 0 0 0 2.7 2.7H22.6" fill="none" stroke="#2b2b2b" stroke-width="2.3"/><path d="M15.6 4.4L19.8 8.6" fill="none" stroke="#3b7f92" stroke-width="1.5"/></svg>
<span class="t s " style="left:1334.0px;top:947.7px;font-size:24px;line-height:30px;color:#222;transform:scaleX(0.9728);max-width:640px;overflow:hidden;">Roboto-Regular.53c0d4e5.woff2</span>
<div class="a" style="left:1283.5px;top:982.3px;width:931.5px;height:42.0px;background:#f5f5f5;"></div>
<svg class="a" style="left:1298.8px;top:986.5px;" width="24" height="31" viewBox="0 0 24 31"><path d="M4.2 1.3H13.6L22.7 10.4V27a2.9 2.9 0 0 1-2.9 2.9H4.2a2.9 2.9 0 0 1-2.9-2.9V4.2a2.9 2.9 0 0 1 2.9-2.9z" fill="none" stroke="#2b2b2b" stroke-width="2.4" stroke-linejoin="round"/><path d="M12.9 1.4V7.6a2.7 2.7 0 0 0 2.7 2.7H22.6" fill="none" stroke="#2b2b2b" stroke-width="2.3"/></svg>
<span class="t s " style="left:1334.0px;top:989.7px;font-size:24px;line-height:30px;color:#222;transform:scaleX(0.9564);max-width:640px;overflow:hidden;">?sentry_key=3ab6e0b3c2f84a0e9a0d7d1f6c5b4a39&amp;sentry_ver</span>
<div class="a" style="left:1283.5px;top:1024.3px;width:931.5px;height:42.0px;background:#fff;"></div>
<svg class="a" style="left:1298.8px;top:1028.5px;" width="24" height="31" viewBox="0 0 24 31"><path d="M4.2 1.3H13.6L22.7 10.4V27a2.9 2.9 0 0 1-2.9 2.9H4.2a2.9 2.9 0 0 1-2.9-2.9V4.2a2.9 2.9 0 0 1 2.9-2.9z" fill="none" stroke="#2b2b2b" stroke-width="2.4" stroke-linejoin="round"/><path d="M12.9 1.4V7.6a2.7 2.7 0 0 0 2.7 2.7H22.6" fill="none" stroke="#2b2b2b" stroke-width="2.3"/><path d="M15.6 4.4L19.8 8.6" fill="none" stroke="#b98316" stroke-width="1.5"/></svg>
<span class="t s " style="left:1334.0px;top:1031.7px;font-size:24px;line-height:30px;color:#222;transform:scaleX(0.9879);">MicrosoftAjax.js</span>
<div class="a" style="left:1283.5px;top:1066.3px;width:931.5px;height:42.0px;background:#f5f5f5;"></div>
<svg class="a" style="left:1298.8px;top:1070.5px;" width="24" height="31" viewBox="0 0 24 31"><path d="M4.2 1.3H13.6L22.7 10.4V27a2.9 2.9 0 0 1-2.9 2.9H4.2a2.9 2.9 0 0 1-2.9-2.9V4.2a2.9 2.9 0 0 1 2.9-2.9z" fill="none" stroke="#2b2b2b" stroke-width="2.4" stroke-linejoin="round"/><path d="M12.9 1.4V7.6a2.7 2.7 0 0 0 2.7 2.7H22.6" fill="none" stroke="#2b2b2b" stroke-width="2.3"/><path d="M15.6 4.4L19.8 8.6" fill="none" stroke="#b98316" stroke-width="1.5"/></svg>
<span class="t s " style="left:1334.0px;top:1073.7px;font-size:24px;line-height:30px;color:#222;transform:scaleX(0.9831);">outlook_strings.js</span>
<div class="a" style="left:1283.5px;top:1108.3px;width:931.5px;height:42.0px;background:#fff;"></div>
<svg class="a" style="left:1298.8px;top:1112.5px;" width="24" height="31" viewBox="0 0 24 31"><path d="M4.2 1.3H13.6L22.7 10.4V27a2.9 2.9 0 0 1-2.9 2.9H4.2a2.9 2.9 0 0 1-2.9-2.9V4.2a2.9 2.9 0 0 1 2.9-2.9z" fill="none" stroke="#2b2b2b" stroke-width="2.4" stroke-linejoin="round"/><path d="M12.9 1.4V7.6a2.7 2.7 0 0 0 2.7 2.7H22.6" fill="none" stroke="#2b2b2b" stroke-width="2.3"/><path d="M15.6 4.4L19.8 8.6" fill="none" stroke="#b98316" stroke-width="1.5"/></svg>
<span class="t s " style="left:1334.0px;top:1115.7px;font-size:24px;line-height:30px;color:#222;transform:scaleX(0.9385);">oteljs_agave.js</span>
<div class="a" style="left:1283.5px;top:1150.3px;width:931.5px;height:42.0px;background:#f5f5f5;"></div>
<svg class="a" style="left:1298.8px;top:1154.5px;" width="24" height="31" viewBox="0 0 24 31"><path d="M4.2 1.3H13.6L22.7 10.4V27a2.9 2.9 0 0 1-2.9 2.9H4.2a2.9 2.9 0 0 1-2.9-2.9V4.2a2.9 2.9 0 0 1 2.9-2.9z" fill="none" stroke="#2b2b2b" stroke-width="2.4" stroke-linejoin="round"/><path d="M12.9 1.4V7.6a2.7 2.7 0 0 0 2.7 2.7H22.6" fill="none" stroke="#2b2b2b" stroke-width="2.3"/><path d="M15.6 4.4L19.8 8.6" fill="none" stroke="#7a3eb5" stroke-width="1.5"/></svg>
<span class="t s " style="left:1334.0px;top:1157.7px;font-size:24px;line-height:30px;color:#222;transform:scaleX(0.9514);max-width:640px;overflow:hidden;">branding.css?area=default</span>
<div class="a" style="left:1283.5px;top:1192.3px;width:931.5px;height:42.0px;background:#fff;"></div>
<svg class="a" style="left:1298.8px;top:1196.5px;" width="24" height="31" viewBox="0 0 24 31"><path d="M4.2 1.3H13.6L22.7 10.4V27a2.9 2.9 0 0 1-2.9 2.9H4.2a2.9 2.9 0 0 1-2.9-2.9V4.2a2.9 2.9 0 0 1 2.9-2.9z" fill="none" stroke="#2b2b2b" stroke-width="2.4" stroke-linejoin="round"/><path d="M12.9 1.4V7.6a2.7 2.7 0 0 0 2.7 2.7H22.6" fill="none" stroke="#2b2b2b" stroke-width="2.3"/><path d="M15.6 4.4L19.8 8.6" fill="none" stroke="#3b7f92" stroke-width="1.5"/></svg>
<span class="t s " style="left:1334.0px;top:1199.7px;font-size:24px;line-height:30px;color:#222;transform:scaleX(0.9952);">Roboto-Bold.167cfd08.woff2</span>
<div class="a" style="left:1283.5px;top:1234.3px;width:931.5px;height:42.0px;background:#f5f5f5;"></div>
<svg class="a" style="left:1298.8px;top:1238.5px;" width="24" height="31" viewBox="0 0 24 31"><path d="M4.2 1.3H13.6L22.7 10.4V27a2.9 2.9 0 0 1-2.9 2.9H4.2a2.9 2.9 0 0 1-2.9-2.9V4.2a2.9 2.9 0 0 1 2.9-2.9z" fill="none" stroke="#2b2b2b" stroke-width="2.4" stroke-linejoin="round"/><path d="M12.9 1.4V7.6a2.7 2.7 0 0 0 2.7 2.7H22.6" fill="none" stroke="#2b2b2b" stroke-width="2.3"/></svg>
<span class="t s " style="left:1334.0px;top:1241.7px;font-size:24px;line-height:30px;color:#222;transform:scaleX(0.9796);">ip</span>
<span class="t s " style="left:1992.4px;top:569.7px;font-size:24px;line-height:30px;color:#222;transform:scaleX(0.9482);">95faa639661c915766</span>
<div class="a" style="left:1900px;top:564.3px;width:93px;height:38.0px;background:#f5f5f5;"></div>
<span class="t s " style="left:1997.8px;top:989.7px;font-size:24px;line-height:30px;color:#222;transform:scaleX(1.0169);">sion=7</span>
<div class="a" style="left:1900px;top:984.3px;width:96px;height:38.0px;background:#f5f5f5;"></div>
</div>
<div class="a menu" style="left:1535px;top:435px;width:462px;height:763px"></div>
<div class="a" style="left:1535px;top:635.3px;width:462px;height:2.0px;background:#d8d8d8;"></div>
<div class="a" style="left:1535px;top:773.4px;width:462px;height:2.0px;background:#d8d8d8;"></div>
<div class="a" style="left:1535px;top:847.4px;width:462px;height:2.0px;background:#d8d8d8;"></div>
<div class="a" style="left:1535px;top:985.4px;width:462px;height:2.0px;background:#d8d8d8;"></div>
<div class="a" style="left:1535px;top:1123.5px;width:462px;height:2.0px;background:#d8d8d8;"></div>
<div class="a" style="left:1543px;top:1133.7px;width:446px;height:56.0px;background:#eeeeee;border-radius:6px;"></div>
<span class="t s " style="left:1618.9px;top:459.4px;font-size:24px;line-height:30px;color:#1b1b1b;transform:scaleX(0.9752);">Open in Sources panel</span>
<span class="t s " style="left:1618.9px;top:523.4px;font-size:24px;line-height:30px;color:#1b1b1b;transform:scaleX(1.0035);">Open in new tab</span>
<span class="t s " style="left:1618.9px;top:587.4px;font-size:24px;line-height:30px;color:#1b1b1b;transform:scaleX(0.9568);">Edit and Resend</span>
<span class="t s " style="left:1618.9px;top:661.4px;font-size:24px;line-height:30px;color:#1b1b1b;transform:scaleX(0.9650);">Clear browser cache</span>
<span class="t s " style="left:1618.9px;top:725.4px;font-size:24px;line-height:30px;color:#1b1b1b;transform:scaleX(0.9763);">Clear browser cookies</span>
<span class="t s " style="left:1618.9px;top:799.4px;font-size:24px;line-height:30px;color:#1b1b1b;transform:scaleX(0.9745);">Copy</span>
<span class="t s " style="left:1618.9px;top:873.4px;font-size:24px;line-height:30px;color:#1b1b1b;transform:scaleX(0.9551);">Block request URL</span>
<span class="t s " style="left:1618.9px;top:937.4px;font-size:24px;line-height:30px;color:#1b1b1b;transform:scaleX(0.9948);">Block request domain</span>
<span class="t s " style="left:1618.9px;top:1011.4px;font-size:24px;line-height:30px;color:#1b1b1b;transform:scaleX(0.9607);">Sort By</span>
<span class="t s " style="left:1618.9px;top:1075.4px;font-size:24px;line-height:30px;color:#1b1b1b;transform:scaleX(0.9941);">Header Options</span>
<span class="t s " style="left:1618.9px;top:1149.4px;font-size:24px;line-height:30px;color:#1b1b1b;transform:scaleX(0.9745);">Save all as HAR with content</span>
<svg class="a" style="left:1949px;top:802.1px;" width="13.6" height="22.6" viewBox="-2 -2 13.6 22.6"><path d="M0 0L9.6 9.3L0 18.6" fill="none" stroke="#222" stroke-width="2" stroke-linejoin="miter"/></svg>
<svg class="a" style="left:1949px;top:1014.1px;" width="13.6" height="22.6" viewBox="-2 -2 13.6 22.6"><path d="M0 0L9.6 9.3L0 18.6" fill="none" stroke="#222" stroke-width="2" stroke-linejoin="miter"/></svg>
<svg class="a" style="left:1949px;top:1078.1px;" width="13.6" height="22.6" viewBox="-2 -2 13.6 22.6"><path d="M0 0L9.6 9.3L0 18.6" fill="none" stroke="#222" stroke-width="2" stroke-linejoin="miter"/></svg>
<svg class="a" style="left:1726.6px;top:1159.1px;" width="28.5" height="42.74999999999999" viewBox="-1 -1 15 22.5"><path d="M0.6 0.6V16.6L4.5 12.9L7.3 19.3L10.1 18.1L7.4 11.9H12.2z" fill="#fff" stroke="#1a1a24" stroke-width="1.15" stroke-linejoin="round"/></svg>
<div class="a" style="left:1593.2px;top:1134.2px;width:357.6px;height:59.4px;box-sizing:border-box;border:5.8px solid #ff0000"></div>
<div class="a" style="left:1279px;top:10px;width:4.400000000000091px;height:95.5px;background:#2a73e0;"></div>
<div class="a" style="left:1279px;top:105.5px;width:4.400000000000091px;height:1170.5px;background:#222;"></div>
<div class="a" style="left:1283.4px;top:186px;width:1.2999999999999545px;height:162.5px;background:#c9ced6;"></div>
<div class="a" style="left:1283.4px;top:348.5px;width:3.099999999999909px;height:927.5px;background:#d3d8e0;"></div>
</div>
</body></html>
